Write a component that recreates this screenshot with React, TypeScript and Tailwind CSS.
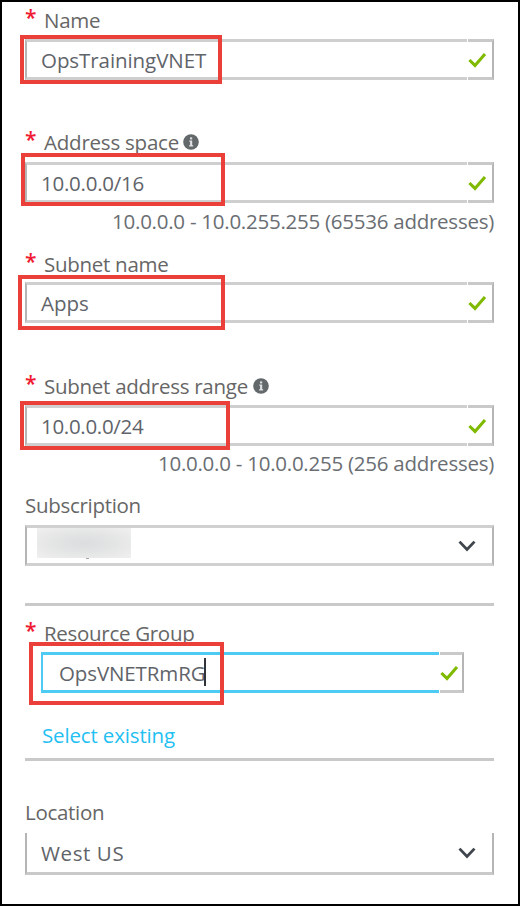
import type { ReactNode } from "react";

function Label({ children, required = false }: { children: ReactNode; required?: boolean }) {
  return (
    <div className="flex h-7 items-start leading-7 text-[#666666]">
      {required && <span className="h-7 w-[19px] text-[21px] font-semibold leading-[23px] text-[#f01a33]">*</span>}
      {children}
    </div>
  );
}

function Info({ className = "" }: { className?: string }) {
  return (
    <svg className={`mt-[6px] size-4 ${className}`} viewBox="0 0 16 16">
      <circle cx="8" cy="8" r="7.8" fill="#63686b" />
      <rect x="7" y="3.4" width="2.2" height="2" fill="#dfe1e2" />
      <path d="M6.3 6.6h2.9v4.6h1v1.2H6.1v-1.2h1V7.8h-.8z" fill="#dfe1e2" />
    </svg>
  );
}

function Check() {
  return (
    <svg className="h-4 w-[19px]" viewBox="0 0 19 16" fill="none">
      <path d="M1.4 8 L7 13.4 L17 2" stroke="#7fba00" strokeWidth="3.1" />
    </svg>
  );
}

function Chevron() {
  return (
    <svg className="h-3 w-[18px]" viewBox="0 0 18 12" fill="none">
      <path d="M1.5 1.6 L9 9.4 L16.5 1.6" stroke="#40464d" strokeWidth="2.8" />
    </svg>
  );
}

function Input({ children, active = false }: { children: ReactNode; active?: boolean }) {
  const tone = active
    ? "border-y-[3px] border-l-2 border-[#4dcbf3] pl-[16px]"
    : "border-y-[3px] border-l-2 border-y-[#cfcfcf] border-l-[#b5b5b5] pl-[14px]";
  return (
    <div className="flex h-[41px] gap-px">
      <div className={`flex flex-1 items-center leading-7 text-[#5f646a] ${tone}`}>{children}</div>
      <div className={`flex items-center border-y-[3px] border-r-2 border-y-[#c9c9c9] border-r-[#b5b5b5] ${active ? "w-[24px]" : "w-[26px]"}`}>
        <Check />
      </div>
    </div>
  );
}

function Highlight({ className }: { className: string }) {
  return <div className={`absolute border-4 border-[#eb4039] ${className}`} />;
}

export default function App() {
  return (
    <main className="relative flex h-[906px] w-[520px] flex-col border-2 border-black bg-white pl-[23px] pr-6 font-['Open_Sans','Noto_Sans',sans-serif] text-[20.5px]">
      <section className="relative h-[122px] pt-1">
        <Label required><span className="tracking-[-0.3px]">Name</span></Label>
        <div className="mt-[5px]"><Input><span className="pt-px tracking-[-0.07px]">OpsTrainingVNET</span></Input></div>
        <Highlight className="-left-[5px] top-[33px] h-[49px] w-[202px]" />
      </section>

      <section className="relative h-[124px] pt-1">
        <Label required><span className="tracking-[-0.22px]">Address space</span><Info className="ml-1" /></Label>
        <div className="mt-[6px]"><Input><span className="tracking-[-0.25px]">10.0.0.0/16</span></Input></div>
        <div className="mt-[4px] text-right leading-7 text-[#6a6e73]"><span className="tracking-[-0.25px]">10.0.0.0 - 10.0.255.255 (65536 addresses)</span></div>
        <Highlight className="-left-1 top-[29px] h-[53px] w-[204px]" />
      </section>

      <section className="relative h-[121px] pt-[2px]">
        <Label required><span className="tracking-[-0.28px]">Subnet name</span></Label>
        <div className="mt-1"><Input><span>Apps</span></Input></div>
        <Highlight className="-left-[7px] top-[27px] h-[55px] w-[207px]" />
      </section>

      <section className="relative h-[120px] pt-[3px]">
        <Label required><span className="tracking-[-0.27px]">Subnet address range</span><Info className="ml-[5px]" /></Label>
        <div className="mt-[5px]"><Input><span className="tracking-[-0.3px]">10.0.0.0/24</span></Input></div>
        <div className="mt-[3px] text-right leading-7 text-[#6a6e73]"><span className="tracking-[-0.25px]">10.0.0.0 - 10.0.0.255 (256 addresses)</span></div>
        <Highlight className="-left-[5px] top-[32px] h-[49px] w-[210px]" />
      </section>

      <section className="h-[117px] border-b-[3px] border-[#c9c9c9] pt-[2px]">
        <Label><span className="tracking-[-0.3px]">Subscription</span></Label>
        <div className="mt-[6px] flex h-[41px] justify-between border-x-2 border-y-[3px] border-x-[#b5b5b5] border-y-[#d0d0d0] pl-[10px] pr-[16px]">
          <div className="h-[30px] w-[94px] bg-[radial-gradient(ellipse_at_center,#dcddde_0%,#e3e4e4_45%,#f0f0f0_100%)]">
            <div className="ml-[49px] mt-[30px] h-px w-[3px] bg-[#a5a8ab]" />
          </div>
          <div className="flex items-center"><Chevron /></div>
        </div>
      </section>

      <section className="relative h-[155px] border-b-[3px] border-[#c9c9c9] pt-[13px]">
        <Label required><span className="tracking-[-0.3px]">Resource Group</span></Label>
        <div className="ml-4 mr-[30px] mt-[5px]">
          <Input active>
            <span className="tracking-[-0.12px]">OpsVNETRmRG</span>
            <i className="-ml-px mb-[2px] h-7 w-[2px] bg-[#30343a]" />
          </Input>
        </div>
        <div className="ml-4 mt-[28px] pl-px leading-7 text-[#1fc0f2]"><span className="tracking-[-0.15px]">Select existing</span></div>
        <Highlight className="left-1 top-[36px] h-[63px] w-[195px]" />
      </section>

      <section className="pt-[37px]">
        <Label><span className="tracking-[-0.3px]">Location</span></Label>
        <div className="mt-[7px] flex h-[42px] items-center justify-between border-x-2 border-b-[3px] border-x-[#b5b5b5] border-b-[#c9c9c9] pl-[14px] pr-[16px] leading-7 text-[#5f646a]">
          <span className="tracking-[0.6px]">West US</span>
          <Chevron />
        </div>
      </section>
    </main>
  );
}
